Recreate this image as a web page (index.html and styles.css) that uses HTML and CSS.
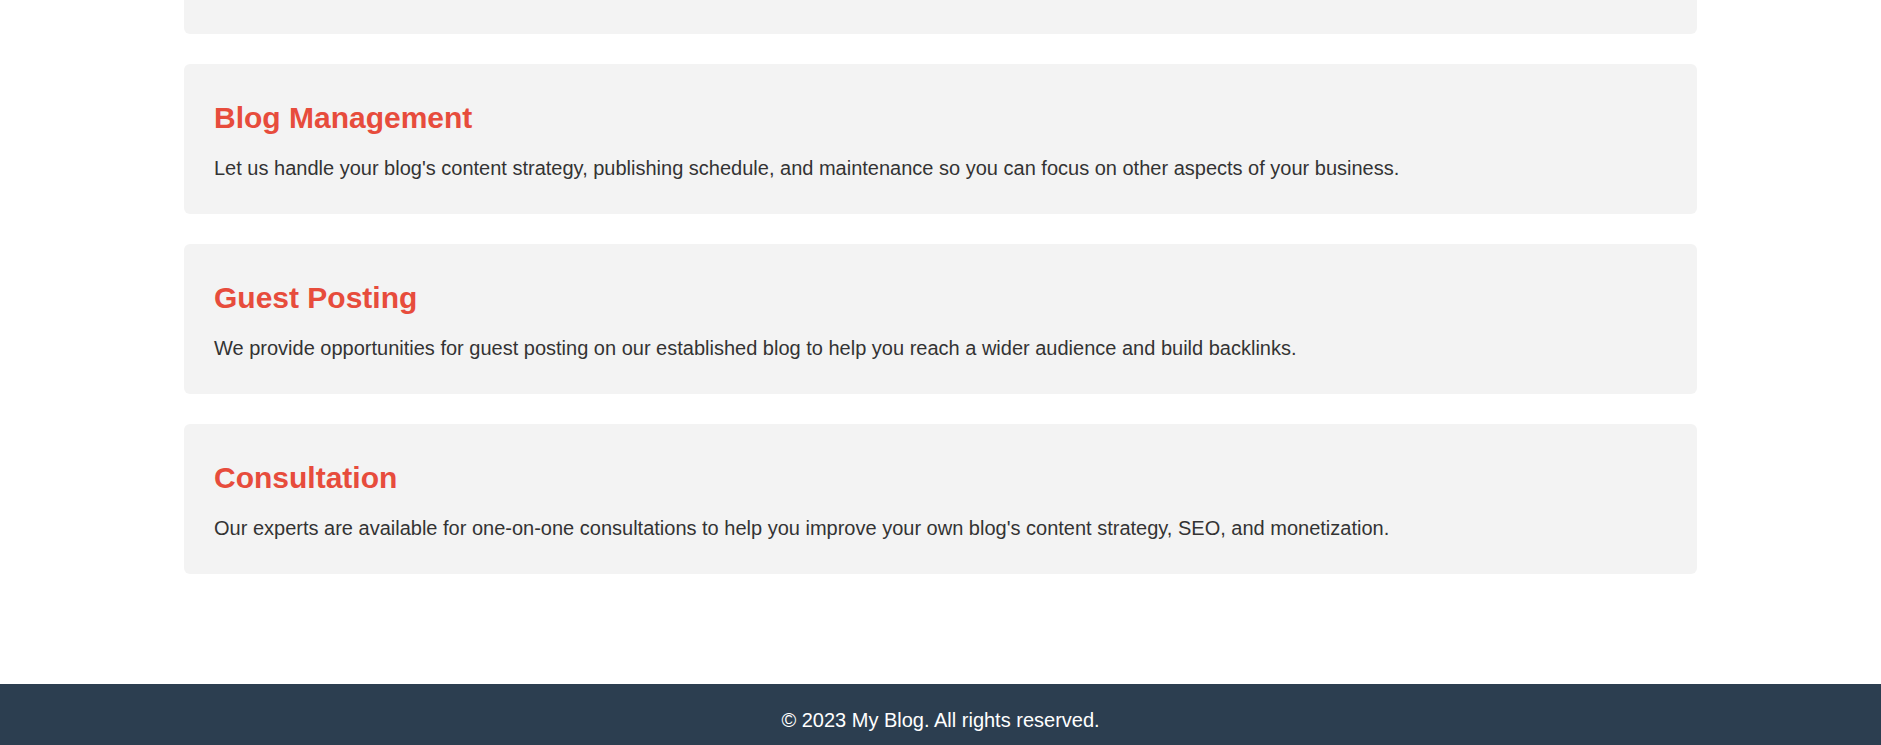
FILE: index.html
```html
<!DOCTYPE html>
<html lang="en">
<head>
<meta charset="utf-8">
<title>Our Services - My Blog</title>
<link rel="stylesheet" href="styles.css">
</head>
<body>
<main class="services">
  <section class="service">
    <h3 class="service-title">SEO Optimization</h3>
    <p class="service-text">We optimize your blog posts and pages to rank higher in search engines and attract more organic traffic.</p>
  </section>
  <section class="service">
    <h3 class="service-title">Blog Management</h3>
    <p class="service-text">Let us handle your blog's content strategy, publishing schedule, and maintenance so you can focus on other aspects of your business.</p>
  </section>
  <section class="service">
    <h3 class="service-title">Guest Posting</h3>
    <p class="service-text">We provide opportunities for guest posting on our established blog to help you reach a wider audience and build backlinks.</p>
  </section>
  <section class="service">
    <h3 class="service-title">Consultation</h3>
    <p class="service-text">Our experts are available for one-on-one consultations to help you improve your own blog's content strategy, SEO, and monetization.</p>
  </section>
</main>
<footer class="site-footer">
  <p class="footer-text">&copy; 2023 My Blog. All rights reserved.</p>
</footer>
</body>
</html>
```

FILE: styles.css
```css
html, body {
  margin: 0;
  padding: 0;
  background: #ffffff;
}

body {
  font-family: "Liberation Sans", Arial, sans-serif;
  color: #333333;
  line-height: 1.6;
}

.services {
  max-width: 1513px;
  margin: -116px auto 0;
  padding-bottom: 110px;
  display: flex;
  flex-direction: column;
  gap: 30px;
}

.service {
  background: #f3f3f3;
  border-radius: 6px;
  padding: 30px;
  display: flex;
  flex-direction: column;
  gap: 10px;
}

.service-title {
  margin: 0;
  color: #e74c3c;
  font-size: 30px;
  font-weight: bold;
  line-height: 48px;
}

.service-text {
  margin: 0;
  font-size: 20px;
  line-height: 32px;
}

.site-footer {
  background: #2c3e50;
  color: #ffffff;
  text-align: center;
  padding: 20px;
}

.footer-text {
  margin: 0;
  font-size: 20px;
  line-height: 32px;
}
```
